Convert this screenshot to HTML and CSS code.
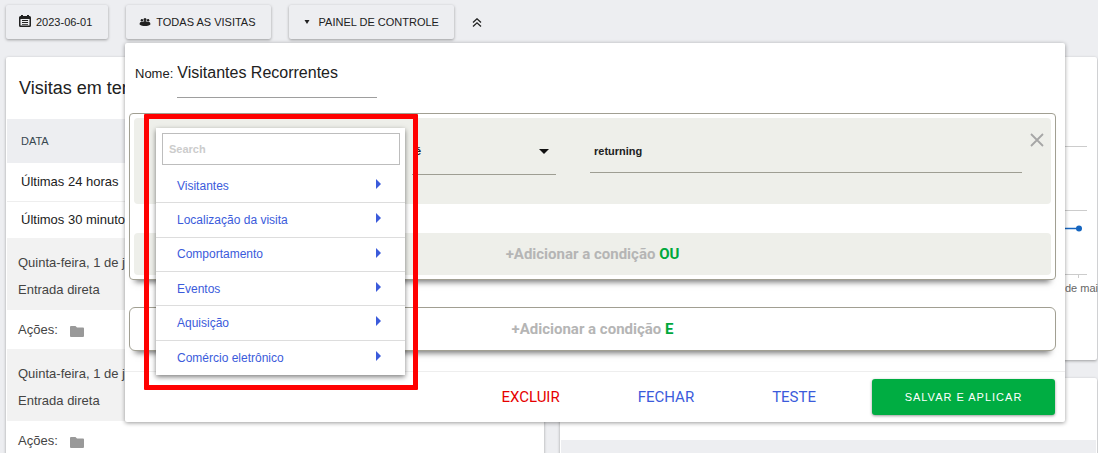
FILE: index.html
```html
<!DOCTYPE html>
<html lang="pt-BR">
<head>
<meta charset="utf-8">
<title>Painel de controle</title>
<link rel="stylesheet" href="styles.css">
</head>
<body>
<nav class="topbar">
  <button class="tool" type="button">
    <svg class="tool-icon" width="12" height="12" viewBox="0 0 12 12"><path fill="#212121" fill-rule="evenodd" d="M2 1V0h2v1h4V0h2v1h.5A1.5 1.5 0 0 1 12 2.500v8A1.500 1.500 0 0 1 10.500 12h-9A1.500 1.500 0 0 1 0 10.500v-8A1.500 1.500 0 0 1 1.500 1zM1.500 4v6.500h9V4zM3 5h6v1H3zm0 2h6v1H3zm0 2h6v.8H3z"/></svg>
    <span>2023-06-01</span>
  </button>
  <button class="tool" type="button">
    <svg class="tool-icon" width="12" height="12" viewBox="0 0 12 12"><g fill="#212121"><circle cx="6" cy="4.400" r="1.500"/><circle cx="2.900" cy="5.200" r="1.200"/><circle cx="9.100" cy="5.200" r="1.200"/><path d="M.6 9.500C.6 7.500 1 6.700 2.900 6.700c.6 0 .9.100 1.100.2.400-.5 1-.8 2-.8s1.600.3 2 .8c.2-.1.500-.2 1.100-.2 1.900 0 2.300.8 2.300 2.800C10 10.600 8 11 6 11S2 10.600.6 9.500z"/></g></svg>
    <span>TODAS AS VISITAS</span>
  </button>
  <button class="tool tool-wide" type="button">
    <svg width="6" height="4" viewBox="0 0 6 4"><path fill="#212121" d="M.5 0h5L3 4z"/></svg>
    <span>PAINEL DE CONTROLE</span>
  </button>
  <button class="collapse" type="button" aria-label="Recolher">
    <svg width="10" height="9" viewBox="0 0 10 9"><path fill="none" stroke="#212121" stroke-width="1.300" d="M1 4.500l4-3.700 4 3.700M1 8.500l4-3.700 4 3.700"/></svg>
  </button>
</nav>

<main class="board">
  <section class="card">
    <h2 class="card-title">Visitas em tempo real</h2>
    <table class="visits">
      <thead><tr><th>DATA</th></tr></thead>
      <tbody>
        <tr><td>Últimas 24 horas</td></tr>
        <tr><td>Últimos 30 minutos</td></tr>
      </tbody>
    </table>
    <div class="visit"><p>Quinta-feira, 1 de junho</p><p>Entrada direta</p></div>
    <div class="actions">Ações:
      <svg width="14" height="11" viewBox="0 0 14 11"><path fill="#999" d="M1 0h4.500l1.500 1.500h6a1 1 0 0 1 1 1V10a1 1 0 0 1-1 1H1a1 1 0 0 1-1-1V1a1 1 0 0 1 1-1z"/></svg>
    </div>
    <div class="visit"><p>Quinta-feira, 1 de junho</p><p>Entrada direta</p></div>
    <div class="actions">Ações:
      <svg width="14" height="11" viewBox="0 0 14 11"><path fill="#999" d="M1 0h4.500l1.500 1.500h6a1 1 0 0 1 1 1V10a1 1 0 0 1-1 1H1a1 1 0 0 1-1-1V1a1 1 0 0 1 1-1z"/></svg>
    </div>
  </section>
  <div class="column">
    <section class="card chart-card">
      <svg class="chart" width="39" height="303" viewBox="0 0 39 303">
        <path stroke="#ccc" fill="none" d="M0 89.500h29M0 153.500h29M0 217.500h29M20.500 217v4"/>
        <path stroke="#1565c0" stroke-width="1.500" d="M0 171.500h21"/>
        <circle cx="21" cy="171.500" r="3" fill="#1565c0"/>
        <text x="7" y="235" class="tick">de mai</text>
      </svg>
    </section>
    <section class="card next-card"><div class="band"></div></section>
  </div>
</main>

<form class="editor">
  <div class="editor-body">
    <div class="name-row">
      <label for="nome">Nome:</label>
      <input id="nome" class="name-input" type="text" value="Visitantes Recorrentes">
    </div>
    <div class="group">
      <div class="condition">
        <select class="operator" aria-label="Operador"><option>é</option></select>
        <svg class="caret" width="10" height="5" viewBox="0 0 10 5"><path fill="#111" d="M0 0h10L5 5z"/></svg>
        <input class="value" type="text" aria-label="Valor" value="returning">
        <button class="remove" type="button" aria-label="Remover">
          <svg width="14" height="14" viewBox="0 0 14 14"><path stroke="#a6a6a6" stroke-width="1.800" d="M1 1l12 12M13 1L1 13"/></svg>
        </button>
      </div>
      <button class="add add-or" type="button">+Adicionar a condição <span>OU</span></button>
    </div>
    <button class="add add-and" type="button">+Adicionar a condição <span>E</span></button>
  </div>
  <footer class="editor-footer">
    <a class="link danger" href="#">EXCLUIR</a>
    <a class="link" href="#">FECHAR</a>
    <a class="link" href="#">TESTE</a>
    <button class="save" type="button">SALVAR E APLICAR</button>
  </footer>
  <div class="menu">
    <input class="search" type="text" placeholder="Search" aria-label="Search">
    <ul class="menu-list">
      <li><a href="#">Visitantes</a></li>
      <li><a href="#">Localização da visita</a></li>
      <li><a href="#">Comportamento</a></li>
      <li><a href="#">Eventos</a></li>
      <li><a href="#">Aquisição</a></li>
      <li><a href="#">Comércio eletrônico</a></li>
    </ul>
  </div>
  <div class="highlight"></div>
</form>
</body>
</html>
```
FILE: styles.css
```css
* { box-sizing: border-box; }
html { height: 100%; overflow: hidden; }
body {
  margin: 0;
  height: 100%;
  position: relative;
  display: flex;
  flex-direction: column;
  overflow: hidden;
  background: #edeef1;
  color: #212121;
  font: 13px "Liberation Sans", Arial, sans-serif;
}
button, input, select { font-family: inherit; color: inherit; }
button { border: 0; padding: 0; background: none; }
p, h2, ul { margin: 0; padding: 0; }

.topbar { display: flex; align-items: center; gap: 18px; padding: 5px 6px 18px; }
.tool {
  display: flex;
  align-items: center;
  gap: 5px;
  height: 34px;
  padding: 0 15px 0 13px;
  border-radius: 2px;
  background: #edeef1;
  box-shadow: 0 1px 3px rgba(0, 0, 0, .35);
  font-size: 11px;
}
.tool:first-child { padding-right: 16px; }
.tool-wide { gap: 9px; padding-left: 15px; }
.tool-icon { margin-bottom: 2px; }
.collapse { display: flex; }

.board {
  flex: 1;
  min-height: 0;
  display: grid;
  grid-template-columns: 1fr 1fr;
  grid-template-rows: minmax(0, 1fr);
  gap: 16px;
  margin-bottom: -8px;
  padding: 0 1px 0 6px;
}
.column { display: flex; flex-direction: column; gap: 18px; min-height: 0; }
.card { padding: 0 1px; background: #fff; border-radius: 2px; box-shadow: 0 1px 3px rgba(0, 0, 0, .35); overflow: hidden; }
.card-title { padding: 21px 12px 20px; font-size: 18px; font-weight: 400; line-height: 21px; }
.visits { width: 100%; border-collapse: collapse; text-align: left; }
.visits th { height: 44px; padding: 0 14px; background: #edeef1; color: #37474f; font-size: 11px; font-weight: 400; }
.visits td { height: 38px; padding: 0 14px; border-bottom: 1px solid #eee; }
.visits tr:last-child td { height: 37px; border-bottom: 0; }
.visit { padding: 11px 11px 7px; background: #f2f2f2; color: #444; line-height: 27px; }
.actions { display: flex; align-items: center; gap: 12px; height: 39px; padding: 0 11px; color: #444; }
.actions svg { margin-top: 3px; }
.chart-card { flex: none; display: flex; justify-content: flex-end; padding: 0; overflow: visible; }
.chart { overflow: visible; }
.tick { fill: #666; font-size: 11px; }
.next-card { flex: 1; min-height: 0; padding-top: 62px; }
.band { height: 40px; background: #edeef1; }

.editor {
  position: absolute;
  top: 43px;
  left: 125px;
  right: 33px;
  background: #fff;
  border-radius: 2px;
  box-shadow: 0 1px 4px rgba(0, 0, 0, .4);
}
.editor-body { padding: 16px 9px 20px 4px; }
.name-row { display: flex; align-items: center; gap: 4px; padding: 0 6px 15px; }
.name-input { width: 200px; height: 39px; padding: 0 0 11px; border: 0; border-bottom: 1px solid #9e9e9e; font-size: 16px; }
.name-row label { padding-bottom: 10px; }
.group { padding: 4px; border: 1px solid #a19f92; border-radius: 4px; box-shadow: 0 8px 6px -6px rgba(0, 0, 0, .55); }
.condition { display: flex; align-items: flex-start; height: 86px; padding-left: 278px; background: #eeefea; border-radius: 4px; }
.operator, .value { border: 0; border-bottom: 1px solid #9e9e93; background: none; font-size: 11px; font-weight: 700; }
.operator { width: 144px; height: 57px; padding: 9px 3px 0; appearance: none; border-radius: 0; }
.caret { margin: 31px 7px 0 -17px; }
.value { flex: 1; min-width: 0; height: 55px; margin-left: 34px; padding: 11px 4px 0; }
.remove { margin: 15px 7px 0 8px; display: flex; }
.add { display: block; width: 100%; height: 42px; border-radius: 4px; color: #b5b5b5; font: 700 15px Roboto, sans-serif; text-align: center; }
.add span { color: #00a83c; }
.add-or { margin-top: 29px; background: #eeefea; }
.add-and { height: 44px; margin-top: 27px; border: 1px solid #a19f92; border-radius: 6px; background: #fff; box-shadow: 0 8px 6px -6px rgba(0, 0, 0, .55); }
.editor-footer { display: flex; align-items: center; justify-content: flex-end; padding: 7px 10px; border-top: 1px solid #eee; }
.link { margin-right: 78px; color: #3b5bdb; font: 15px Roboto, sans-serif; text-decoration: none; }
.link:nth-of-type(3) { margin-right: 56px; }
.link.danger { color: #e60000; }
.save {
  width: 183px;
  height: 36px;
  border-radius: 3px;
  background: #00ad42;
  color: #fff;
  box-shadow: 0 1px 3px rgba(0, 0, 0, .4);
  font-size: 11px;
  letter-spacing: 1px;
}

.menu {
  position: absolute;
  top: 85px;
  left: 31px;
  display: flex;
  flex-direction: column;
  gap: 4px;
  width: 249px;
  min-height: 247px;
  padding-top: 5px;
  background: #fff;
  box-shadow: 0 2px 5px rgba(0, 0, 0, .5);
}
.search { height: 32px; margin: 0 5px 0 6px; padding: 0 6px; border: 1px solid #bdbdbd; background: #fff; font-size: 11px; font-weight: 700; }
.search::placeholder { color: #ccc; opacity: 1; }
.menu-list { flex: 1; display: grid; grid-auto-rows: 1fr; list-style: none; }
.menu-list li { display: grid; border-bottom: 1px solid #ddd; }
.menu-list li:last-child { border-bottom: 0; }
.menu-list a { display: flex; align-items: center; justify-content: space-between; padding: 0 24px 0 21px; color: #3b5bdb; font-size: 12px; text-decoration: none; }
.menu-list a::after { content: ""; margin-bottom: 3px; border: solid transparent; border-width: 5px 0 5px 5px; border-left-color: #3b5bdb; }
.highlight { position: absolute; top: 71px; left: 19px; width: 274px; height: 276px; border: 5px solid #f00; border-radius: 1px; pointer-events: none; }
```
